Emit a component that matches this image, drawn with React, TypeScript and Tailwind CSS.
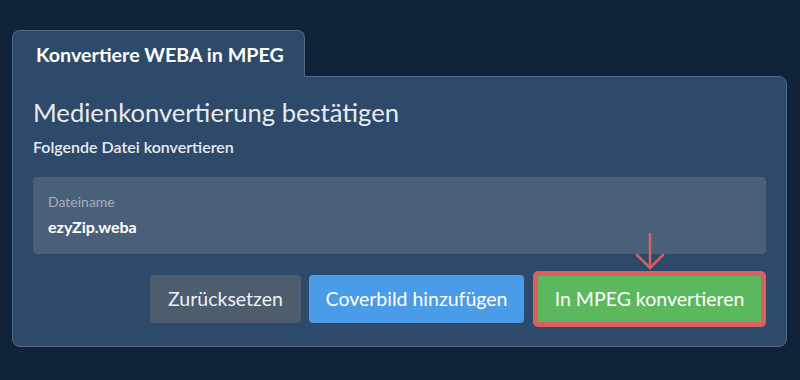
import React from "react";

export default function App() {
  return (
    <div
      className="w-[800px] h-[380px] bg-[#112339] pt-[30px] pl-[12px] pr-[13px]"
      style={{ fontFamily: "Lato, 'Noto Sans', sans-serif" }}
    >
      <div className="flex">
        <div className="relative z-10 -mb-px h-[47px] w-[293px] rounded-t-lg border border-b-0 border-[#4f6a8a] bg-[#2d4a6a] pl-[23px] pt-[12px] text-[19.7px] font-bold leading-[24px] text-white">
          Konvertiere WEBA in MPEG
        </div>
      </div>
      <div className="rounded-b-lg rounded-tr-lg border border-[#4f6a8a] bg-[#2d4a6a] px-[20px] pt-[18px] pb-[19px]">
        <h1 className="text-[25.6px] leading-[34px] text-[#e7ebf0]">Medienkonvertierung bestätigen</h1>
        <p className="mt-[8px] text-[16px] font-semibold leading-[20px] text-[#e7ebf0]">
          Folgende Datei konvertieren
        </p>
        <div className="mt-[20px] h-[77px] rounded bg-[#4a5f78] px-[15px] pt-[16px]">
          <div className="text-[14px] leading-[18px] text-[#a4afbd]">Dateiname</div>
          <div className="mt-[6px] text-[16px] font-bold leading-[20px] text-white">ezyZip.weba</div>
        </div>
        <div className="mt-[17px] flex items-center justify-end gap-[8px]">
          <button className="h-[48px] w-[151px] rounded bg-[#4d5d6e] text-center text-[19.5px] text-[#eef1f4]">
            Zurücksetzen
          </button>
          <button className="h-[48px] w-[215px] rounded bg-[#4a9be8] text-center text-[19.5px] text-white">
            Coverbild hinzufügen
          </button>
          <div className="relative ml-[1px] rounded-[5px] border-[5px] border-[#d9605e]">
            <svg
              className="absolute left-[97px] top-[-43px]"
              width="30"
              height="38"
              viewBox="0 0 30 38"
              fill="none"
              stroke="#d9605e"
              strokeWidth="2.5"
              strokeLinecap="round"
            >
              <path d="M15 1 V35" />
              <path d="M2 22 L15 35 L28 22" />
            </svg>
            <button className="block h-[46px] w-[223px] bg-[#5cb85c] text-center text-[19.5px] text-white">
              In MPEG konvertieren
            </button>
          </div>
        </div>
      </div>
    </div>
  );
}
